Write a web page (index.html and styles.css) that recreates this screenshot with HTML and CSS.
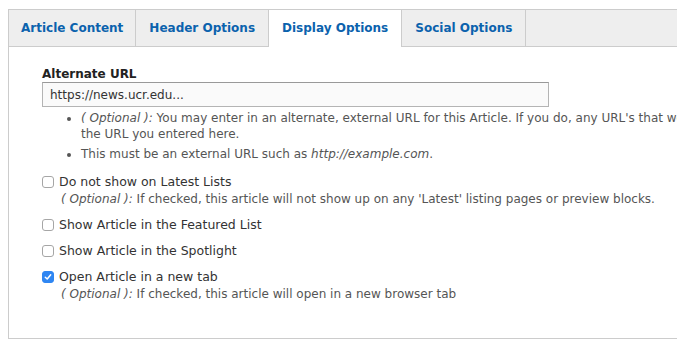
FILE: index.html
```html
<!DOCTYPE html>
<html lang="en">
<head>
    <meta charset="UTF-8">
    <meta name="viewport" content="width=device-width, initial-scale=1.0">
    <title>Article Display Options</title>
    <link rel="stylesheet" href="styles.css">
</head>
<body>
    <div class="tabs-wrap">
        <ul class="tabs">
            <li class="tab"><a href="#">Article Content</a></li>
            <li class="tab"><a href="#">Header Options</a></li>
            <li class="tab active"><a href="#">Display Options</a></li>
            <li class="tab"><a href="#">Social Options</a></li>
        </ul>

        <div class="pane">
            <div class="form-item">
                <label class="field-label" for="alt-url">Alternate URL</label>
                <input class="text-input" id="alt-url" type="text" value="https://news.ucr.edu...">
                <ul class="help-list">
                    <li><em>( Optional ):</em> You may enter in an alternate, external URL for this Article. If you do, any URL's that would normally point to this Article will point to<br>the URL you entered here.</li>
                    <li>This must be an external URL such as <em>http://example.com</em>.</li>
                </ul>
            </div>

            <div class="check-item">
                <label class="check-label"><span class="box"></span>Do not show on Latest Lists</label>
                <div class="description"><em>( Optional ):</em> If checked, this article will not show up on any 'Latest' listing pages or preview blocks.</div>
            </div>

            <div class="check-item">
                <label class="check-label"><span class="box"></span>Show Article in the Featured List</label>
            </div>

            <div class="check-item">
                <label class="check-label"><span class="box"></span>Show Article in the Spotlight</label>
            </div>

            <div class="check-item">
                <label class="check-label">
                    <span class="box checked">
                        <svg width="8" height="8" viewBox="0 0 8 8"><path d="M1.3 4.2 L3.2 6 L6.7 1.8" fill="none" stroke="#fff" stroke-width="1.5" stroke-linecap="round" stroke-linejoin="round"/></svg>
                    </span>Open Article in a new tab</label>
                <div class="description"><em>( Optional ):</em> If checked, this article will open in a new browser tab</div>
            </div>
        </div>
    </div>
</body>
</html>
```

FILE: styles.css
```css
html, body {
    overflow: hidden;
}
body {
    margin: 0;
    padding: 9px 0 0 8px;
    font-family: "DejaVu Sans", Verdana, sans-serif;
    font-size: 12px;
    color: #333;
    background: #fff;
}
.tabs-wrap {
    width: 1100px;
}
.tabs {
    display: flex;
    margin: 0;
    padding: 0;
    list-style: none;
    background: #eee;
    border-top: 1px solid #ccc;
    border-bottom: 1px solid #ccc;
    height: 36px;
}
.tab {
    border-left: 1px solid #ccc;
    height: 36px;
}
.tab:first-child a {
    padding: 0 12px;
}
.tab:last-child {
    border-right: 1px solid #ccc;
}
.tab a {
    display: block;
    padding: 0 13px;
    line-height: 37px;
    font-weight: bold;
    font-size: 12px;
    color: #0b62ad;
    text-decoration: none;
}
.tab.active {
    background: #fff;
    height: 37px;
}
.pane {
    border-left: 1px solid #ccc;
    border-bottom: 1px solid #ccc;
    height: 292px;
    padding: 19px 0 0 33px;
    box-sizing: border-box;
}
.form-item {
    margin-bottom: 12px;
}
.field-label {
    display: block;
    font-weight: bold;
    font-size: 12px;
    line-height: 16px;
    color: #222;
    margin-bottom: 0;
}
.text-input {
    display: block;
    width: 507px;
    height: 25px;
    box-sizing: border-box;
    border: 1px solid #b4b4b4;
    border-top-color: #999;
    background: #fafafa;
    padding: 0 7px;
    font-family: inherit;
    font-size: 12px;
    color: #333;
    margin: 0;
}
.help-list {
    margin: 3px 0 0;
    padding-left: 39px;
    color: #555;
    line-height: 16px;
    white-space: nowrap;
}
.help-list li {
    margin-bottom: 4px;
}
.check-item {
    margin-bottom: 10px;
}
.check-label {
    display: flex;
    align-items: center;
    font-size: 12.5px;
    color: #333;
    line-height: 16px;
}
.box {
    width: 12px;
    height: 12px;
    box-sizing: border-box;
    border: 1px solid #a6a6a6;
    border-radius: 3px;
    background: #fff;
    margin-right: 5px;
    display: flex;
    align-items: center;
    justify-content: center;
}
.box.checked {
    background: #2f86f2;
    border-color: #2f86f2;
}
.box svg {
    display: block;
}
.description {
    padding-left: 19px;
    color: #555;
    line-height: 16px;
    margin-top: 1px;
}
```
